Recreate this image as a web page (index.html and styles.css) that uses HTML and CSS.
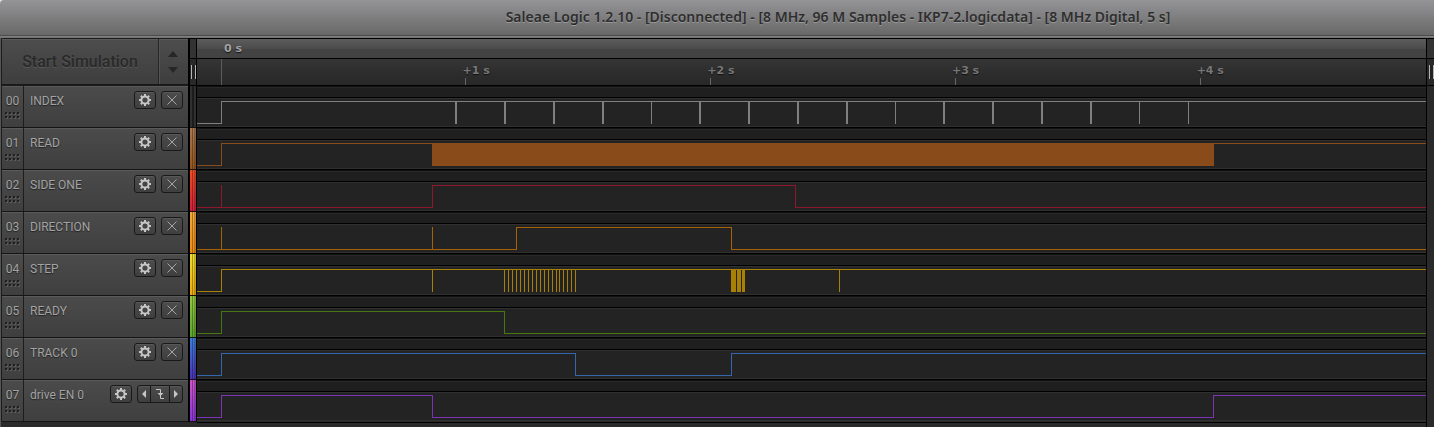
FILE: index.html
```html
<!DOCTYPE html>
<html lang="en">
<head>
<meta charset="utf-8">
<title>Saleae Logic</title>
<link rel="stylesheet" href="styles.css">
</head>
<body>
<header class="titlebar"><h1 class="title">Saleae Logic 1.2.10 - [Disconnected] - [8 MHz, 96 M Samples - IKP7-2.logicdata] - [8 MHz Digital, 5 s]</h1></header>
<main class="workspace">
  <section class="sidebar" id="sidebar">
    <div class="sim">
      <button class="start" disabled>Start Simulation</button>
      <div class="spin">
        <button class="spin-btn" aria-label="Increase"><svg width="10" height="6" viewBox="0 0 10 6"><path d="M0 6L5 0L10 6Z"/></svg></button>
        <button class="spin-btn" aria-label="Decrease"><svg width="10" height="6" viewBox="0 0 10 6"><path d="M0 0L5 6L10 0Z"/></svg></button>
      </div>
    </div>
  </section>
  <div class="stripes" id="stripes"><div class="grip"></div></div>
  <section class="graph" id="graph">
    <div class="ruler-major"><span class="origin">0 s</span></div>
    <div class="ruler-minor">
      <span class="tick">+1 s</span><span class="tick">+2 s</span><span class="tick">+3 s</span><span class="tick">+4 s</span>
    </div>
  </section>
  <aside class="edge"><div class="grip"></div></aside>
</main>
<script src="app.js"></script>
</body>
</html>
```
FILE: styles.css
```css
* { box-sizing: border-box; }
body {
  margin: 0;
  min-height: 100vh;
  display: flex;
  flex-direction: column;
  background: #e4e4e4;
  font-family: Roboto, "Liberation Sans", sans-serif;
  overflow: hidden;
}
button { padding: 0; margin: 0; border: 0; background: none; font: inherit; color: inherit; }
svg { display: block; }
.titlebar {
  height: 38px;
  padding-top: 8px;
  background: linear-gradient(#949497, #686868 35px, #4c4c4c 35px, #4c4c4c 36px, #858585 36px, #6c6c6c 38px);
  border-top-left-radius: 4px;
}
.title {
  margin: 0;
  padding-left: 242px;
  text-align: center;
  white-space: nowrap;
  font: 600 14px/18px "Noto Sans", "Open Sans", sans-serif;
  color: #2e2e2e;
  text-shadow: 0 1px 0 #9a9a9a;
}
.workspace { flex: 1; display: grid; grid-template-columns: 187px 9px minmax(0, 1fr) 8px; align-items: start; border-left: 1px solid #555; background: #2a2a2a; }
.sidebar { min-width: 0; border-left: 1px solid #1c1c1c; border-top: 1px solid #1c1c1c; border-top-left-radius: 4px; }
.sim {
  display: flex;
  height: 47px;
  border-bottom: 2px solid #1a1a1a;
  background: linear-gradient(#4d4d4d, #3e3e3e);
  box-shadow: inset 0 1px 0 #5a5a5a;
}
.start {
  flex: 1;
  border-right: 1px solid #262626;
  font-size: 16px;
  font-weight: 500;
  color: #292929;
  text-shadow: 0 1px 0 #595959;
}
.spin { flex: 0 0 29px; display: flex; flex-direction: column; justify-content: center; align-items: center; gap: 10px; padding-right: 2px; border-left: 1px solid #555; }
.spin-btn { line-height: 0; }
.spin-btn path { fill: #262626; }
.channel {
  display: flex;
  height: 42px;
  border-bottom: 1px solid #151515;
  background: linear-gradient(#4b4b4b, #3f3f3f);
  box-shadow: inset 0 1px 0 #5a5a5a;
  color: #a3a3a3;
  text-shadow: 0 1px 1px #222;
}
.num { flex: 0 0 22px; padding-top: 6px; border-right: 1px solid #1d1d1d; font-size: 12px; line-height: 18px; text-align: center; }
.handle { margin: 2px auto 0 3px; }
.handle .dark { fill: #1f1f1f; }
.handle .light { fill: #5c5c5c; }
.body { flex: 1; display: flex; align-items: flex-start; padding: 5px 5px 0 6px; }
.name { flex: 1; padding-top: 1px; font-size: 12px; line-height: 18px; white-space: nowrap; }
.tool, .trigger {
  display: flex;
  align-items: center;
  justify-content: center;
  height: 18px;
  margin-left: 5px;
  border: 1px solid #191919;
  border-radius: 3px;
  background: linear-gradient(#4c4c4c, #3f3f3f);
  box-shadow: inset 0 1px 0 #585858;
}
.tool { width: 22px; }
.trigger { width: 46px; align-items: stretch; }
.trig { flex: 0 0 12px; display: flex; align-items: center; justify-content: center; }
.trig-mid { flex: 1; border-left: 1px solid #191919; border-right: 1px solid #191919; }
.stripes { min-width: 0; border: solid #000; border-width: 1px 1px 0 2px; background: #2a2a2a; }
.grip { height: 47px; padding: 26px 0 0 2px; border-bottom: 1px solid #000; background: linear-gradient(#333 19px, #000 19px, #000 20px, #292929 20px); }
.grip::before { content: ""; display: block; width: 3px; height: 14px; border: solid #b4b4b4; border-width: 0 1px; background: #222; }
.stripes .grip { padding-left: 1px; }
.stripe { height: 42px; border-bottom: 1px solid #111; }
.graph { min-width: 0; border-top: 1px solid #000; border-bottom: 1px solid #000; }
.ruler-major, .ruler-minor { font: bold 11px/14px "DejaVu Sans", sans-serif; text-shadow: 0 1px 1px #111; }
.ruler-major { height: 20px; padding: 3px 0 0 27px; border-bottom: 1px solid #000; background: linear-gradient(#5c5c5c, #4b4b4b 10px, #434343 10px, #434343); color: #a2a2a2; }
.ruler-minor { height: 27px; display: flex; padding: 5px 0 0 21.6%; border-bottom: 1px solid #000; background: linear-gradient(#5c5c5c, #5c5c5c) 24px 0 / 1px 100% no-repeat, linear-gradient(#353535, #272727); color: #777; }
.tick { flex: 0 0 25.4%; white-space: nowrap; }
.tick::after { content: ""; display: block; width: 1px; height: 7px; margin: 0 0 0 3px; background: #666; }
.wave { height: 42px; border-bottom: 1px solid #000; }
.wave-band { height: 12px; background: linear-gradient(#111 1px, #282828 1px, #282828 2px, #1f1f1f 2px); border-bottom: 1px solid #000; }
.wave-plot { height: 29px; border: solid #303030; border-width: 1px 0; background: #232323; }
.wave-svg { width: 100%; height: 27px; }
.wave-svg path { fill: none; stroke-width: 1px; vector-effect: non-scaling-stroke; }
.wave:last-child { border-bottom: 0; }
.edge { min-width: 0; align-self: stretch; border: solid #000; border-width: 1px 0 0 1px; background: #2a2a2a; }
```
FILE: app.js
```js
// Edges, pulses and blocks are x positions on a 1229-unit time axis.
const channels = [
  { name: "INDEX", color: "#7f7f7f", stripe: "linear-gradient(90deg,#303030 2px,#1c1c1c 2px,#1c1c1c 4px,#303030 4px)", edges: [24],
    blocks: [[258,2],[307,2],[356,2],[405,2],[454,1],[502,2],[551,2],[600,2],[649,2],[698,1],[746,2],[795,2],[844,2],[893,2],[942,1],[991,1]] },
  { name: "READ", color: "#8a4b1b", stripe: ["#a87850", "#93561f"], edges: [24], blocks: [[235,782]] },
  { name: "SIDE ONE", color: "#8e182b", stripe: ["#ee4e22", "#cf1f3c"], edges: [235, 598], blocks: [[24,1]] },
  { name: "DIRECTION", color: "#a56205", stripe: ["#f3a93a", "#ec8a12"], edges: [319, 534], blocks: [[24,1],[235,1]] },
  { name: "STEP", color: "#a88004", stripe: ["#eede30", "#eda90c"], edges: [24],
    blocks: [235,307,311,315,319,323,327,331,335,339,343,347,351,355,359,362,366,370,374,378,642].map(x => [x, 1]).concat([[534,5],[540,4],[545,3]]) },
  { name: "READY", color: "#467812", stripe: ["#93c742", "#5ca52b"], edges: [24, 307], blocks: [] },
  { name: "TRACK 0", color: "#3366ad", stripe: ["#3b80d8", "#4a33b4"], edges: [24, 378, 534], blocks: [] },
  { name: "drive EN 0", color: "#7c33b3", stripe: ["#cd55cc", "#8736d2"], edges: [24, 235, 1016], blocks: [], trigger: true }
];

const gear = '<svg width="14" height="14" viewBox="0 0 14 14"><circle cx="7" cy="7" r="3.6" fill="none" stroke="#c6c6c6" stroke-width="2"/><path d="M7 1V3M7 11V13M1 7H3M11 7H13M2.8 2.8L4.2 4.2M9.8 9.8L11.2 11.2M2.8 11.2L4.2 9.8M9.8 4.2L11.2 2.8" stroke="#c6c6c6" stroke-width="2"/></svg>';
const cross = '<svg width="10" height="10" viewBox="0 0 10 10"><path d="M.5 .5L9.5 9.5M9.5 .5L.5 9.5" stroke="#a5a5a5"/></svg>';
const falling = '<svg width="10" height="12" viewBox="0 0 10 12"><path d="M1 1.5H5.5V10.5H9" fill="none" stroke="#c6c6c6"/><path d="M2.5 5H8.5L5.5 8Z" fill="#c6c6c6"/></svg>';
const left = '<svg width="4" height="8" viewBox="0 0 4 8"><path d="M4 0V8L0 4Z" fill="#c6c6c6"/></svg>';
const right = '<svg width="4" height="8" viewBox="0 0 4 8"><path d="M0 0V8L4 4Z" fill="#c6c6c6"/></svg>';

let dots = "";
for (let r = 0; r < 2; r++) for (let c = 0; c < 4; c++) {
  dots += `<rect class="light" x="${c * 4 + 1}" y="${r * 4 + 1}" width="2" height="2"/><rect class="dark" x="${c * 4}" y="${r * 4}" width="2" height="2"/>`;
}
const handle = `<svg class="handle" width="15" height="7" viewBox="0 0 15 7">${dots}</svg>`;

const HIGH = 2.5, LOW = 24.5;
function trace(ch) {
  let y = LOW, d = `M0 ${y}`;
  for (const x of ch.edges) {
    y = y === LOW ? HIGH : LOW;
    d += `H${x + 0.5}V${y}`;
  }
  return d + "H1229";
}

channels.forEach((ch, i) => {
  const tools = ch.trigger
    ? `<div class="trigger"><button class="trig" aria-label="Previous trigger">${left}</button><button class="trig trig-mid" aria-label="Falling edge">${falling}</button><button class="trig" aria-label="Next trigger">${right}</button></div>`
    : `<button class="tool" aria-label="Remove trigger">${cross}</button>`;
  sidebar.insertAdjacentHTML("beforeend",
    `<div class="channel"><div class="num">0${i}${handle}</div><div class="body"><span class="name">${ch.name}</span><button class="tool" aria-label="Settings">${gear}</button>${tools}</div></div>`);

  const fill = Array.isArray(ch.stripe)
    ? `linear-gradient(90deg,transparent 2px,rgba(0,0,0,.3) 2px,rgba(0,0,0,.3) 3px,transparent 3px,transparent 4px,rgba(0,0,0,.25) 4px,rgba(0,0,0,.12) 6px),linear-gradient(${ch.stripe})`
    : ch.stripe;
  stripes.insertAdjacentHTML("beforeend", `<div class="stripe" style="background:${fill}"></div>`);

  const blocks = ch.blocks.map(([x, w]) => `<rect x="${x}" y="2" width="${w}" height="23" fill="${ch.color}"/>`).join("");
  graph.insertAdjacentHTML("beforeend",
    `<div class="wave"><div class="wave-band"></div><div class="wave-plot"><svg class="wave-svg" viewBox="0 0 1229 27" preserveAspectRatio="none" shape-rendering="crispEdges">${blocks}<path d="${trace(ch)}" stroke="${ch.color}"/></svg></div></div>`);
});
```
